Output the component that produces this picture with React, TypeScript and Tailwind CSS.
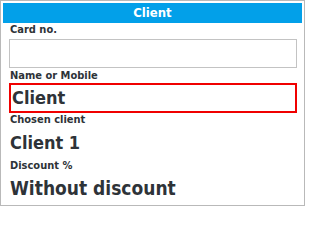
export default function App() {
  return (
    <div
      className="w-[305px] h-[206px] border border-[#b9b9b9] bg-white p-[2px] text-[#2e3338]"
      style={{ fontFamily: '"DejaVu Sans Condensed", "DejaVu Sans", Verdana, sans-serif' }}
    >
      <div className="h-[20px] bg-[#02a0e9] text-white text-[13px] font-bold leading-[20px] text-center">
        Client
      </div>
      <div className="pl-[6px] pr-[5px]">
        <div className="text-[11px] font-bold leading-[14px] pl-[1px]">Card no.</div>
        <div className="mt-[2px] h-[29px] border border-[#c3c3c3]" />
        <div className="text-[11px] font-bold leading-[14px] mt-[1px] pl-[1px]">Name or Mobile</div>
        <div className="h-[30px] border-2 border-[#f00000] px-[1px] text-[18px] font-bold leading-[26px]">
          Client
        </div>
        <div className="text-[11px] font-bold leading-[14px] pl-[1px]">Chosen client</div>
        <div className="text-[18px] font-bold leading-[32px] pl-[1px]">Client 1</div>
        <div className="text-[11px] font-bold leading-[14px] pl-[1px]">Discount %</div>
        <div className="text-[19px] font-bold leading-[30px] pl-[1px]">Without discount</div>
      </div>
    </div>
  );
}
